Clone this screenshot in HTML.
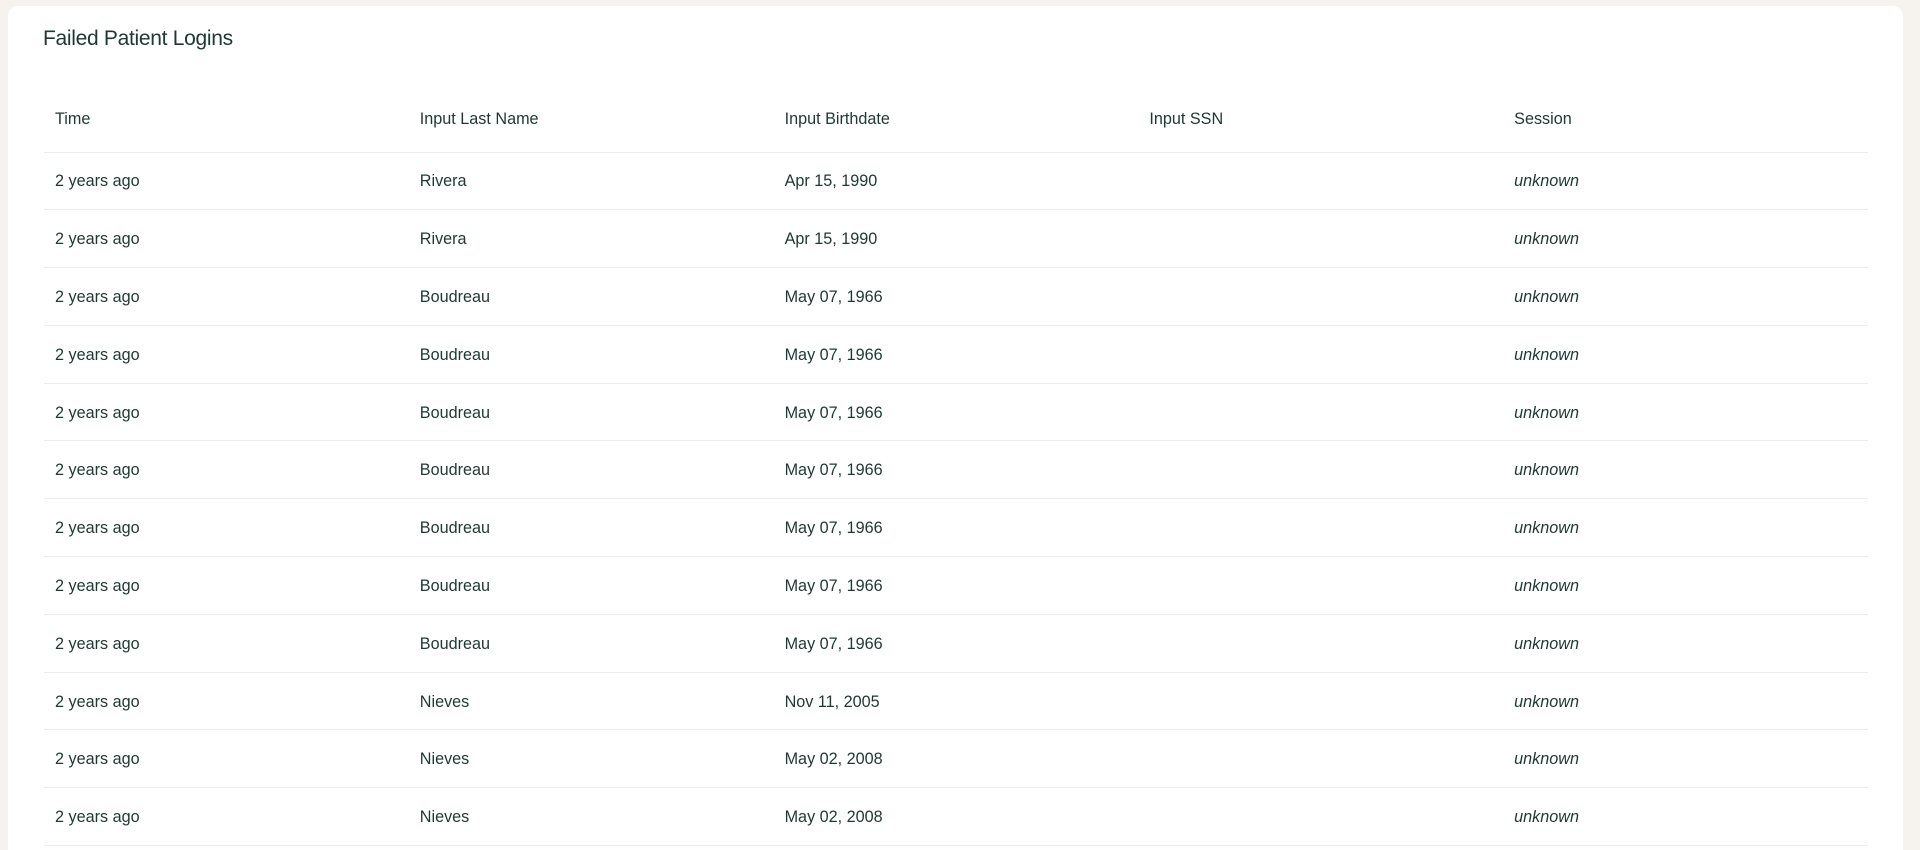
<!DOCTYPE html>
<html><head><style>
html,body{margin:0;width:1920px;height:850px;overflow:hidden}
body{background:#f6f3ef;font-family:"Liberation Sans",sans-serif;color:#1e3833;position:relative}
.card{position:absolute;left:8px;top:6px;width:1895px;height:844px;background:#fff;border-radius:10px 10px 0 0}
h1{position:absolute;left:35px;top:21px;margin:0;font-size:21px;font-weight:normal;letter-spacing:-0.3px}
table{position:absolute;left:36px;top:90px;width:1824px;border-collapse:collapse;font-size:16.2px}
td,th{text-align:left;padding:0 0 0 11px;font-weight:normal;height:57.8px;border-bottom:1px solid #ececea;width:365px;box-sizing:border-box}
td{padding-top:2px}
th{height:56px;padding-bottom:8px}
td.i{font-style:italic}
</style></head><body>
<div class="card">
<h1>Failed Patient Logins</h1>
<table>
<tr><th>Time</th><th>Input Last Name</th><th>Input Birthdate</th><th>Input SSN</th><th>Session</th></tr>
<tr><td>2 years ago</td><td>Rivera</td><td>Apr 15, 1990</td><td></td><td class="i">unknown</td></tr>
<tr><td>2 years ago</td><td>Rivera</td><td>Apr 15, 1990</td><td></td><td class="i">unknown</td></tr>
<tr><td>2 years ago</td><td>Boudreau</td><td>May 07, 1966</td><td></td><td class="i">unknown</td></tr>
<tr><td>2 years ago</td><td>Boudreau</td><td>May 07, 1966</td><td></td><td class="i">unknown</td></tr>
<tr><td>2 years ago</td><td>Boudreau</td><td>May 07, 1966</td><td></td><td class="i">unknown</td></tr>
<tr><td>2 years ago</td><td>Boudreau</td><td>May 07, 1966</td><td></td><td class="i">unknown</td></tr>
<tr><td>2 years ago</td><td>Boudreau</td><td>May 07, 1966</td><td></td><td class="i">unknown</td></tr>
<tr><td>2 years ago</td><td>Boudreau</td><td>May 07, 1966</td><td></td><td class="i">unknown</td></tr>
<tr><td>2 years ago</td><td>Boudreau</td><td>May 07, 1966</td><td></td><td class="i">unknown</td></tr>
<tr><td>2 years ago</td><td>Nieves</td><td>Nov 11, 2005</td><td></td><td class="i">unknown</td></tr>
<tr><td>2 years ago</td><td>Nieves</td><td>May 02, 2008</td><td></td><td class="i">unknown</td></tr>
<tr><td>2 years ago</td><td>Nieves</td><td>May 02, 2008</td><td></td><td class="i">unknown</td></tr>
</table>
</div>
</body></html>
